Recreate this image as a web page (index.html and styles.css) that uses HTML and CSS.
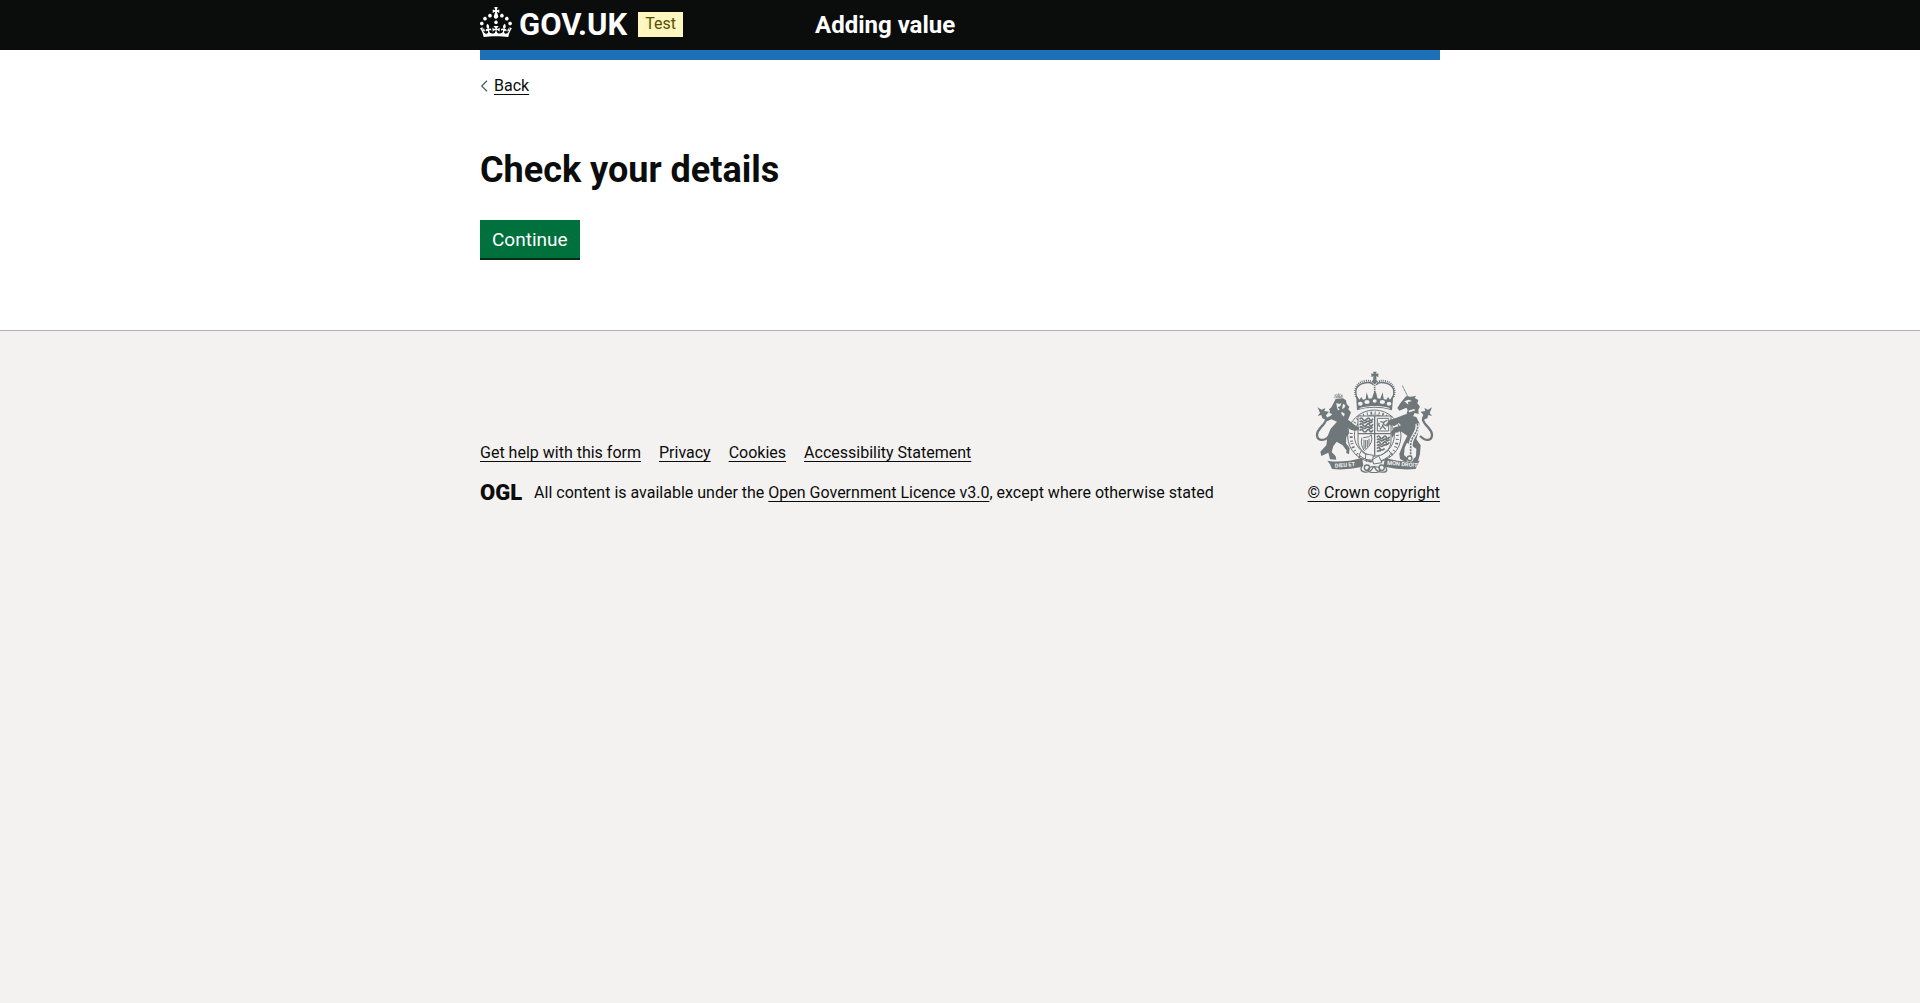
FILE: index.html
```
<!DOCTYPE html>
<html lang="en">
<head>
<meta charset="utf-8">
<title>Check your details - Adding value</title>
<meta name="viewport" content="width=device-width, initial-scale=1">
<link rel="stylesheet" href="styles.css">
</head>
<body>
<header class="header">
  <div class="container header-row">
    <div class="header-logo">
      <a class="logo-link" href="#">
        <svg class="crown" viewBox="0 0 32 30" width="32" height="30" fill="currentColor" aria-hidden="true">
          <path d="M22.6 10.4c-1 .4-2-.1-2.4-1-.4-.9.1-2 1-2.4.9-.4 2 .1 2.4 1s-.1 2-1 2.4m4.9 3c-1 .4-2-.1-2.4-1-.4-.9.1-2 1-2.4.9-.4 2 .1 2.4 1s0 2-1 2.4m3.3 4.8c-1 .4-2-.1-2.4-1-.4-.9.1-2 1-2.4.9-.4 2 .1 2.4 1s-.1 2-1 2.4M16.7 17.1c-.9.4-2-.1-2.4-1-.4-.9.1-2 1-2.4.9-.4 2 .1 2.4 1s-.1 2-1 2.4M17 4.7l2.3 1.2V2.5l-2.3.7-.2-.2.9-3h-3.4l.9 3-.2.2-2.3-.7v3.4L15 4.7l.2.2-1.3 4c-.1.2-.1.4-.1.6 0 1.1.8 2 1.9 2.2h.7c1-.2 1.9-1.1 1.9-2.1 0-.2 0-.4-.1-.6l-1.3-4c-.1-.2 0-.2 0-.3m-7.6 5.7c.9.4 2-.1 2.4-1 .4-.9-.1-2-1-2.4-.9-.4-2 .1-2.4 1s0 2 1 2.4m-5 3c.9.4 2-.1 2.4-1 .4-.9-.1-2-1-2.4-.9-.4-2 .1-2.4 1s.1 2 1 2.4m-3.2 4.8c.9.4 2-.1 2.4-1 .4-.9-.1-2-1-2.4-.9-.4-2 .1-2.4 1s0 2 1 2.4m14.8 11c4.4 0 8.6.3 12.3.8 1.1-4.5 2.4-7 3.7-8.8l-2.5-.9c.2 1.3.3 1.9 0 2.7-.4-.4-.8-1.1-1.1-2.3l-1.2 4c.7-.5 1.3-.8 2-.9-1.1 2.5-2.6 3.1-3.5 3-1.1-.2-1.7-1.2-1.5-2.1.3-1.2 1.5-1.5 2.1-.1 1.1-2.3-.8-3-2-2.3 1.9-1.9 2.1-3.5.6-5.6-2.1 1.6-2.1 3.2-1.2 5.5-1.2-1.4-3.2-.6-2.5 1.6.9-1.4 2.1-.5 1.9.8-.2 1.1-1.7 2.1-3.5 1.9-2.7-.2-2.9-2.1-2.9-3.6.7-.1 1.9.5 2.9 1.9l.4-4.3c-1.1 1.1-2.1 1.4-3.2 1.4.4-1.2 2.1-3 2.1-3h-5.4s1.7 1.9 2.1 3c-1.1 0-2.1-.2-3.2-1.4l.4 4.3c1-1.4 2.2-2 2.9-1.9-.1 1.5-.2 3.4-2.9 3.6-1.9.2-3.4-.8-3.5-1.9-.2-1.3 1-2.2 1.9-.8.7-2.3-1.2-3-2.5-1.6.9-2.2.9-3.9-1.2-5.5-1.5 2-1.3 3.7.6 5.6-1.2-.7-3.1 0-2 2.3.6-1.4 1.8-1.1 2.1.1.2.9-.3 1.9-1.5 2.1-.9.2-2.4-.5-3.5-3 .6 0 1.2.3 2 .9l-1.2-4c-.3 1.1-.7 1.9-1.1 2.3-.3-.8-.2-1.4 0-2.7l-2.9.9C1.3 23 2.6 25.5 3.7 30c3.7-.5 7.9-.8 12.3-.8"/>
        </svg>
        <span class="logotype">GOV.UK</span>
      </a>
      <span class="tag">Test</span>
    </div>
    <a class="service-name" href="#">Adding value</a>
  </div>
</header>
<div class="container">
  <div class="blue-bar"></div>
  <nav class="back">
    <svg viewBox="0 0 8 12" width="8" height="12" fill="none" stroke="#505a5f" stroke-width="1.2" aria-hidden="true"><path d="M7 .8 1.7 6 7 11.2"/></svg>
    <a class="link" href="#">Back</a>
  </nav>
  <main class="main">
    <h1 class="heading">Check your details</h1>
    <form><button class="button" type="button">Continue</button></form>
  </main>
</div>
<footer class="footer">
  <div class="container footer-row">
    <div>
      <ul class="footer-links">
        <li><a class="link" href="#">Get help with this form</a></li>
        <li><a class="link" href="#">Privacy</a></li>
        <li><a class="link" href="#">Cookies</a></li>
        <li><a class="link" href="#">Accessibility Statement</a></li>
      </ul>
      <div class="licence">
        <span class="ogl">OGL</span>
        <span>All content is available under the <a class="link" href="#">Open Government Licence v3.0</a>, except where otherwise stated</span>
      </div>
    </div>
    <a class="copyright" href="#">
      <svg viewBox="65 60 375 306" width="125" height="102" fill="#6f777b" stroke="#6f777b" stroke-width="0" aria-hidden="true">
        <!-- crown -->
        <path d="M251 62h11l-2 7 7-2v11l-7-2 2 9h-11l2-9-7 2V67l7 2z"/>
        <circle cx="256" cy="91" r="7"/>
        <g fill="none" stroke-width="4">
          <path d="M206 146c-14-26-5-45 19-50 13-3 23-1 27 6M307 146c14-26 5-45-19-50-13-3-23-1-27 6"/>
          <path stroke-width="6" stroke-dasharray="3 3" d="M200 138c-8-26 4-44 26-48 12-2 20 0 26 6M313 138c8-26-4-44-26-48-12-2-20 0-26 6"/>
          <path stroke-width="5" stroke-dasharray="4 2" d="M256 96v30"/>
        </g>
        <path d="M203 178l-3-46 10 14 6-8 5 8 8-2 3-20 6 19 10-1 5-15 3-8 5 8 3 15 9 1 7-19 3 20 8 2 5-8 6 8 10-14-4 46c-33-10-74-10-105 0z"/>
        <g fill="#f3f2f1"><ellipse cx="213" cy="158" rx="7" ry="6"/><ellipse cx="233" cy="153" rx="8" ry="6"/><ellipse cx="256" cy="150" rx="6" ry="5"/><ellipse cx="279" cy="153" rx="8" ry="6"/><ellipse cx="299" cy="158" rx="7" ry="6"/><path d="M211 171c30-8 61-8 90 0v2c-30-8-61-8-90 0z"/></g>
        <!-- garter -->
        <g fill="none" stroke-width="3">
          <ellipse cx="255" cy="255" rx="80" ry="78"/>
          <ellipse cx="255" cy="253" rx="60" ry="61"/>
          <path stroke-width="9" stroke-dasharray="3 8 5 7 3 9" d="M187 272c-7-44 13-83 63-86s78 37 74 79-28 61-64 65-66-16-73-58"/>
        </g>
        <!-- quartered shield -->
        <path fill="#f3f2f1" stroke-width="3" d="M206 195h99v76c0 25-24 41-49 50-25-9-50-25-50-50z"/>
        <path fill="none" stroke-width="4" d="M256 195v124M206 248h99"/>
        <g fill="none" stroke-width="5">
          <path d="M211 205q5-8 10 0t11 0 9 0 10-2M211 213q5-5 9 0t11 0 9 0 10-2M211 222q5-8 10 0t11 0 9 0 10-2M211 230q5-5 9 0t11 0 9 0 10-2M211 239q5-8 10 0t11 0 9 0 10-2"/>
          <path d="M263 259q5-8 9 0t10 0 9 0 10-2M263 267q5-5 9 0t10 0 9 0 10-2M263 276q5-8 9 0t10 0 9 0 9-2M263 284q5-5 9 0t10 0 12-2M263 293q5-8 9 0t14 0M263 302q5-5 12-2"/>
          <path stroke-width="3" d="M264 202h34v38h-34z"/>
          <path stroke-width="4" d="M272 235l8-10 9 10M279 226l6-14 9-4M286 215l-13-3M284 221l9 4M272 227q-7-4-2-11"/>
          <path stroke-width="3" d="M218 260q-6 22 7 39M222 260q20-1 24-8 8 23-20 47M224 266v28M229 267v26M234 267v21M239 263v20"/>
        </g>
        <!-- lion -->
        <path d="M136 130l6 5 6-8 5 8 7-6-3 13h-18z" opacity=".6"/>
        <path fill="none" stroke-width="2" stroke-dasharray="3 2" d="M136 142q-5-12 9-12 16-3 15 12"/>
        <path d="M139 144l22-2 9 6 2 11 8 8-3 8 8 9-4 11-5 11 23 18 11 6-2 8-14 1-19-8 5 14-9 13-1 19 11 14-2 19-9-5 2-6-12-16-18-11-10 14-5 17 12 13 2 10-19-1-5-20-21 10-3-13 18-19 3-26 10-24 19-21-17-7-12 6-5-10 14-6 6-6-9-3 2-6-3-5 7-6z"/>
        <path fill="#f3f2f1" d="M141 156l9 3 6-4-3 11-8 2 6 8-5 2-3-8zM161 158l7 5-3 8-7 3zM157 182l9 6-2 9-8-8z"/>
        <path fill="none" stroke-width="7" d="M121 255c-19 18-36 14-38-2-2-20 28-33 27-48 0-8-5-10-8-17"/>
        <path d="M85 169l12 7 11-5-3 9 14 2-9 11 4 15-15-6-3-10-11 3 7-9z"/>
        <!-- unicorn -->
        <path fill="none" stroke-width="3" stroke-dasharray="4 1" d="M339 104l17 34"/>
        <path d="M350 136l15 1 15-3-4 7 11 6-3 10 8 10-5 9 1 13-12-3-5 10-21-2 5-17-4-7-21 9-6-8 10-16z"/>
        <path d="M322 200l26-10 33 8 10 20-5 29-5 18 13 18-2 26-6 22-19 7 5-13 8-9 1-23-28-18-7 16-2 21 11 10-4 12-19-10-2-16 13-32 11-22-18-12-15-1-13 20-3-17 8-14 22-7-7-7-12 9-17-4-3 7-6-8 11-13z"/>
        <path fill="#f3f2f1" d="M345 151l13-5 10 4-12 3 1 8-6-5zM357 179l17-5 4 4-18 6z"/>
        <path fill="none" stroke-width="7" d="M392 255c19 18 34 14 36-2 2-20-28-33-27-48 0-8 5-10 8-17"/>
        <path d="M428 169l-12 7-11-5 3 9-14 2 9 11-4 15 15-6 3-10 11 3-7-9z"/>
        <g fill="none"><path stroke="#f3f2f1" stroke-width="12" d="M384 218c6 28-21 38-20 65v33"/><path stroke-width="5" stroke-dasharray="6 3" d="M384 218c6 28-21 38-20 65v33"/><circle stroke-width="4" cx="361" cy="322" r="7"/></g>
        <!-- buckle and motto ribbon -->
        <path fill="#f3f2f1" stroke-width="3" d="M216 300q18 18 39 16 24 0 43-18l7 10q-15 21-45 24-30-2-51-20z"/>
        <path fill="#f3f2f1" stroke-width="3" d="M230 309l22 4-2 15-22-3zM249 326l19-11 10 20-25 4z"/>
        <path d="M114 329q47 8 104-9l4 22-6 6q-44 10-88 6l-6-14zM391 329q-47 8-104-9l-4 22 6 6q44 10 90 6l6-14z"/>
        <g fill="none" stroke-width="4"><path d="M220 342q-12 18 5 21 21 3 27-16M284 342q16 18 1 21-22 3-30-16"/><ellipse cx="254" cy="356" rx="18" ry="9"/><circle cx="233" cy="350" r="8"/><circle cx="277" cy="350" r="8"/></g>
        <g class="motto"><text x="137" y="350" transform="rotate(-5 137 350)">DIEU ET</text><text x="293" y="341" transform="rotate(5 293 341)">MON DROIT</text></g>
      </svg>
      <span class="link">© Crown copyright</span>
    </a>
  </div>
</footer>
</body>
</html>
```
FILE: styles.css
```
* { box-sizing: border-box; }
html { min-height: 100%; background: #f3f2f1; }
body {
  margin: 0;
  background: #fff;
  color: #0b0c0c;
  font-family: Roboto, "Liberation Sans", sans-serif;
  font-size: 16px;
  line-height: 20px;
}
a { color: inherit; text-decoration: none; }
.link { text-decoration: underline; text-decoration-thickness: 1px; text-underline-offset: 3px; text-decoration-skip-ink: none; }
.container { max-width: 960px; margin: 0 auto; }

.header { background: #0b0c0c; color: #fff; }
.header-row { display: flex; align-items: center; height: 50px; }
.header-logo { display: flex; align-items: center; width: 335px; padding-bottom: 2px; }
.logo-link { display: flex; align-items: center; gap: 7px; padding-bottom: 4px; }
.logotype { font-size: 31px; line-height: 30px; font-weight: 700; padding-top: 5px; }
.tag { margin-left: 11px; padding: 2px 7px 3px; background: #fff7bf; color: #594d00; }
.service-name { font-size: 24px; line-height: 30px; font-weight: 700; }

.blue-bar { height: 10px; background: #1d70b8; }
.back { display: flex; align-items: center; gap: 6px; margin-top: 16px; }
.main { padding: 54px 0 70px; }
.heading { margin: 0 0 30px; font-size: 36px; line-height: 40px; font-weight: 700; }
.button {
  display: block;
  padding: 8px 12px 7px;
  border: 0;
  border-bottom: 2px solid #002d18;
  background: #00703c;
  color: #fff;
  font: inherit;
  font-size: 19px;
  line-height: 23px;
}

.footer { padding: 40px 0 25px; border-top: 1px solid #b1b4b6; background: #f3f2f1; }
.footer-row { display: flex; align-items: flex-end; justify-content: space-between; }
.footer-links { display: flex; gap: 18px; margin: 0 0 20px; padding: 0; list-style: none; }
.licence { display: flex; align-items: center; gap: 12px; }
.ogl { font-size: 22px; font-weight: 900; line-height: 20px; }
.copyright { display: flex; flex-direction: column; align-items: center; gap: 10px; }
.motto { fill: #f3f2f1; font-size: 17px; font-weight: 700; }
```
